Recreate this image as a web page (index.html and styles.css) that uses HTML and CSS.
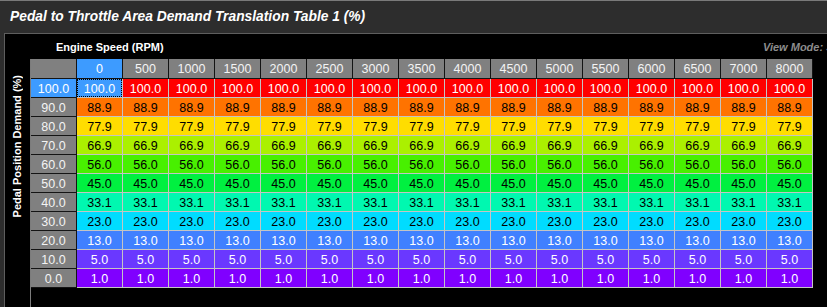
FILE: index.html
```html
<!DOCTYPE html>
<html lang="en">
<head>
<meta charset="utf-8">
<title>Pedal to Throttle Area Demand Translation Table 1 (%)</title>
<link rel="stylesheet" href="styles.css">
</head>
<body>
<div class="window">
  <div class="titlebar">Pedal to Throttle Area Demand Translation Table 1 (%)</div>
  <div class="panel">
    <div class="panel-head">
      <span class="x-axis">Engine Speed (RPM)</span>
      <span class="view-mode">View Mode: Simple</span>
    </div>
    <div class="panel-body">
      <div class="y-axis"><span class="y-label">Pedal Position Demand (%)</span></div>
      <div class="table-wrap">
        <div class="grid">
          <div class="row hdr">
            <div class="c corner"></div>
            <div class="c sel">0</div><div class="c">500</div><div class="c">1000</div><div class="c">1500</div><div class="c">2000</div><div class="c">2500</div><div class="c">3000</div><div class="c">3500</div><div class="c">4000</div><div class="c">4500</div><div class="c">5000</div><div class="c">5500</div><div class="c">6000</div><div class="c">6500</div><div class="c">7000</div><div class="c">8000</div>
          </div>
          <div class="row r100">
            <div class="c rh sel">100.0</div>
            <div class="c focus">100.0</div><div class="c">100.0</div><div class="c">100.0</div><div class="c">100.0</div><div class="c">100.0</div><div class="c">100.0</div><div class="c">100.0</div><div class="c">100.0</div><div class="c">100.0</div><div class="c">100.0</div><div class="c">100.0</div><div class="c">100.0</div><div class="c">100.0</div><div class="c">100.0</div><div class="c">100.0</div><div class="c">100.0</div>
          </div>
          <div class="row r90">
            <div class="c rh">90.0</div>
            <div class="c">88.9</div><div class="c">88.9</div><div class="c">88.9</div><div class="c">88.9</div><div class="c">88.9</div><div class="c">88.9</div><div class="c">88.9</div><div class="c">88.9</div><div class="c">88.9</div><div class="c">88.9</div><div class="c">88.9</div><div class="c">88.9</div><div class="c">88.9</div><div class="c">88.9</div><div class="c">88.9</div><div class="c">88.9</div>
          </div>
          <div class="row r80">
            <div class="c rh">80.0</div>
            <div class="c">77.9</div><div class="c">77.9</div><div class="c">77.9</div><div class="c">77.9</div><div class="c">77.9</div><div class="c">77.9</div><div class="c">77.9</div><div class="c">77.9</div><div class="c">77.9</div><div class="c">77.9</div><div class="c">77.9</div><div class="c">77.9</div><div class="c">77.9</div><div class="c">77.9</div><div class="c">77.9</div><div class="c">77.9</div>
          </div>
          <div class="row r70">
            <div class="c rh">70.0</div>
            <div class="c">66.9</div><div class="c">66.9</div><div class="c">66.9</div><div class="c">66.9</div><div class="c">66.9</div><div class="c">66.9</div><div class="c">66.9</div><div class="c">66.9</div><div class="c">66.9</div><div class="c">66.9</div><div class="c">66.9</div><div class="c">66.9</div><div class="c">66.9</div><div class="c">66.9</div><div class="c">66.9</div><div class="c">66.9</div>
          </div>
          <div class="row r60">
            <div class="c rh">60.0</div>
            <div class="c">56.0</div><div class="c">56.0</div><div class="c">56.0</div><div class="c">56.0</div><div class="c">56.0</div><div class="c">56.0</div><div class="c">56.0</div><div class="c">56.0</div><div class="c">56.0</div><div class="c">56.0</div><div class="c">56.0</div><div class="c">56.0</div><div class="c">56.0</div><div class="c">56.0</div><div class="c">56.0</div><div class="c">56.0</div>
          </div>
          <div class="row r50">
            <div class="c rh">50.0</div>
            <div class="c">45.0</div><div class="c">45.0</div><div class="c">45.0</div><div class="c">45.0</div><div class="c">45.0</div><div class="c">45.0</div><div class="c">45.0</div><div class="c">45.0</div><div class="c">45.0</div><div class="c">45.0</div><div class="c">45.0</div><div class="c">45.0</div><div class="c">45.0</div><div class="c">45.0</div><div class="c">45.0</div><div class="c">45.0</div>
          </div>
          <div class="row r40">
            <div class="c rh">40.0</div>
            <div class="c">33.1</div><div class="c">33.1</div><div class="c">33.1</div><div class="c">33.1</div><div class="c">33.1</div><div class="c">33.1</div><div class="c">33.1</div><div class="c">33.1</div><div class="c">33.1</div><div class="c">33.1</div><div class="c">33.1</div><div class="c">33.1</div><div class="c">33.1</div><div class="c">33.1</div><div class="c">33.1</div><div class="c">33.1</div>
          </div>
          <div class="row r30">
            <div class="c rh">30.0</div>
            <div class="c">23.0</div><div class="c">23.0</div><div class="c">23.0</div><div class="c">23.0</div><div class="c">23.0</div><div class="c">23.0</div><div class="c">23.0</div><div class="c">23.0</div><div class="c">23.0</div><div class="c">23.0</div><div class="c">23.0</div><div class="c">23.0</div><div class="c">23.0</div><div class="c">23.0</div><div class="c">23.0</div><div class="c">23.0</div>
          </div>
          <div class="row r20">
            <div class="c rh">20.0</div>
            <div class="c">13.0</div><div class="c">13.0</div><div class="c">13.0</div><div class="c">13.0</div><div class="c">13.0</div><div class="c">13.0</div><div class="c">13.0</div><div class="c">13.0</div><div class="c">13.0</div><div class="c">13.0</div><div class="c">13.0</div><div class="c">13.0</div><div class="c">13.0</div><div class="c">13.0</div><div class="c">13.0</div><div class="c">13.0</div>
          </div>
          <div class="row r10">
            <div class="c rh">10.0</div>
            <div class="c">5.0</div><div class="c">5.0</div><div class="c">5.0</div><div class="c">5.0</div><div class="c">5.0</div><div class="c">5.0</div><div class="c">5.0</div><div class="c">5.0</div><div class="c">5.0</div><div class="c">5.0</div><div class="c">5.0</div><div class="c">5.0</div><div class="c">5.0</div><div class="c">5.0</div><div class="c">5.0</div><div class="c">5.0</div>
          </div>
          <div class="row r0">
            <div class="c rh">0.0</div>
            <div class="c">1.0</div><div class="c">1.0</div><div class="c">1.0</div><div class="c">1.0</div><div class="c">1.0</div><div class="c">1.0</div><div class="c">1.0</div><div class="c">1.0</div><div class="c">1.0</div><div class="c">1.0</div><div class="c">1.0</div><div class="c">1.0</div><div class="c">1.0</div><div class="c">1.0</div><div class="c">1.0</div><div class="c">1.0</div>
          </div>
        </div>
      </div>
    </div>
  </div>
</div>
</body>
</html>
```

FILE: styles.css
```css
* { box-sizing: border-box; }

html, body {
  margin: 0;
  padding: 0;
  width: 827px;
  height: 307px;
  overflow: hidden;
  background: #2d2d2d;
  font-family: "Liberation Sans", Arial, sans-serif;
}

.window {
  height: 307px;
  border-top: 1px solid #7a7a7a;
  display: flex;
  flex-direction: column;
}

.titlebar {
  height: 32px;
  flex: none;
  display: flex;
  align-items: center;
  padding: 0 0 2px 10px;
  color: #ffffff;
  font-size: 13.8px;
  font-weight: bold;
  font-style: italic;
  white-space: nowrap;
}

.panel {
  flex: 1;
  margin-left: 4px;
  border-top: 1px solid #5e5e5e;
  border-left: 1px solid #5e5e5e;
  background: #000;
  display: flex;
  flex-direction: column;
  min-height: 0;
}

.panel-head {
  height: 25px;
  flex: none;
  display: flex;
  align-items: center;
  padding-left: 51px;
  font-size: 11px;
  font-weight: bold;
}

.x-axis { color: #ffffff; }

.view-mode {
  margin-left: auto;
  width: 64px;
  overflow: hidden;
  white-space: nowrap;
  color: #8c8c8c;
  font-style: italic;
}

.panel-body {
  flex: 1;
  display: flex;
  min-height: 0;
}

.y-axis {
  width: 25px;
  flex: none;
  display: flex;
  justify-content: center;
  align-items: flex-start;
}

.y-label {
  margin-top: 16px;
  writing-mode: vertical-rl;
  transform: rotate(180deg);
  color: #ffffff;
  font-size: 11px;
  font-weight: bold;
  line-height: 13px;
  white-space: nowrap;
}

.table-wrap {
  flex: 1;
  border-left: 1px solid #7c7c7c;
}

.grid {
  display: grid;
  grid-template-columns: repeat(17, 46px);
  grid-template-rows: 20px repeat(11, 19px);
  font-size: 12.5px;
}

.row { display: contents; }

.c {
  position: relative;
  display: flex;
  align-items: center;
  justify-content: center;
  padding-top: 1px;
  border-right: 1px solid #c4c4c4;
  border-bottom: 1px solid #c4c4c4;
  white-space: nowrap;
  color: #000;
}

.r100 .c { background: #ff0000; color: #ffffff; }
.r90 .c { background: #ff7300; }
.r80 .c { background: #ffdd00; }
.r70 .c { background: #abf000; }
.r60 .c { background: #48f000; }
.r50 .c { background: #00f040; }
.r40 .c { background: #00f8b0; }
.r30 .c { background: #00dcff; }
.r20 .c { background: #4080ff; color: #ffffff; }
.r10 .c { background: #6a38ff; color: #ffffff; }
.r0 .c { background: #8000ff; color: #ffffff; }

.row.hdr .c, .row .c.rh {
  background: #808080;
  color: #f4f4f4;
  border-right-color: #141414;
  border-bottom-color: #141414;
}

.row.hdr .c.sel, .row .c.rh.sel, .row .c.focus {
  background: #3d9bff;
  color: #ffffff;
}

.focus::after {
  content: "";
  position: absolute;
  left: 0;
  top: 0;
  right: 0;
  bottom: 0;
  border: 1px dotted #000;
}
```
